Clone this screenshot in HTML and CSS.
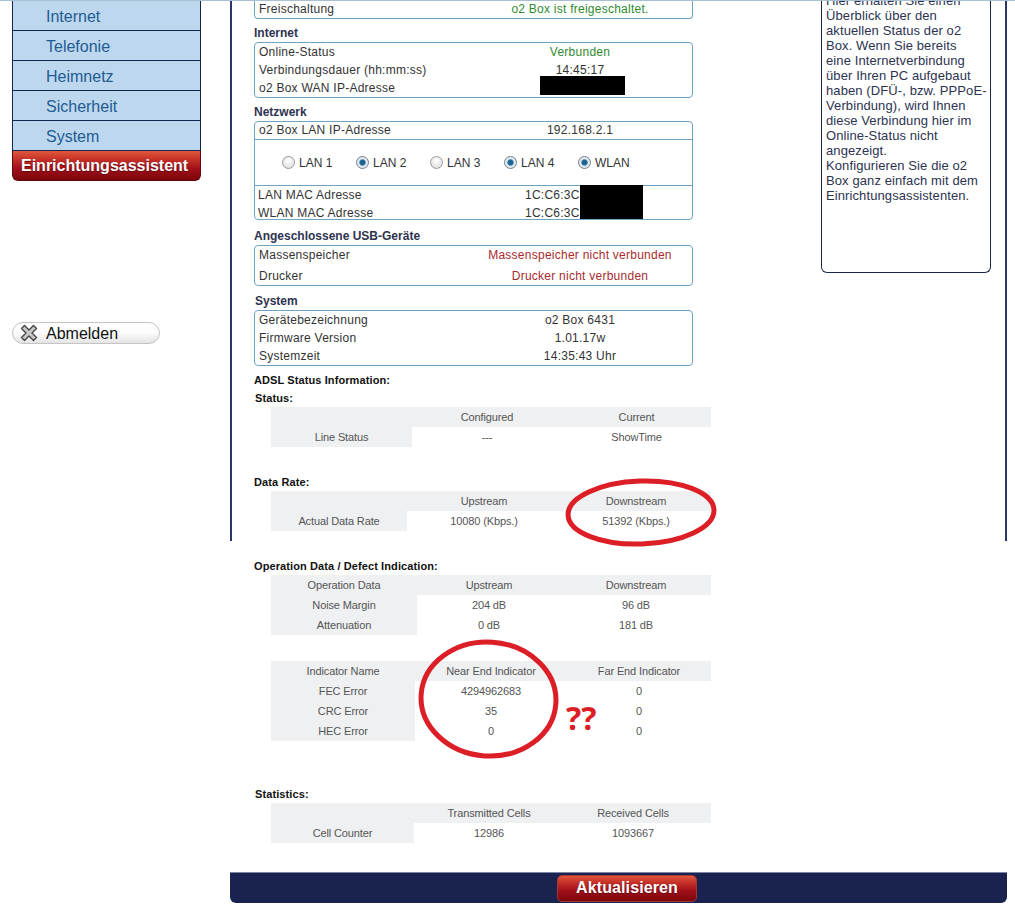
FILE: index.html
```html
<!DOCTYPE html>
<html lang="de">
<head>
<meta charset="utf-8">
<title>o2 Box Status</title>
<link rel="stylesheet" href="styles.css">
</head>
<body>
<div class="topline"></div>
<div class="page">
  <aside class="sidebar">
    <nav class="nav">
      <a class="nav-item">Internet</a>
      <a class="nav-item">Telefonie</a>
      <a class="nav-item">Heimnetz</a>
      <a class="nav-item">Sicherheit</a>
      <a class="nav-item">System</a>
      <a class="nav-wizard">Einrichtungsassistent</a>
    </nav>
    <a class="logout">
      <svg class="logout-icon" viewBox="0 0 18 18" width="18" height="18"><path d="M4.5 1.5 9 6l4.5-4.5 3 3L12 9l4.500 4.500-3 3L9 12l-4.500 4.500-3-3L6 9 1.500 4.500z" fill="#c9c9c9" stroke="#444" stroke-width="1.400" stroke-linejoin="round"/></svg>
      <span>Abmelden</span>
    </a>
  </aside>

  <main class="main">
    <div class="panel">
      <div class="content">
        <div class="box box-open">
          <div class="row"><span>Freischaltung</span><span class="val green">o2 Box ist freigeschaltet.</span></div>
        </div>

        <h3 class="heading">Internet</h3>
        <div class="box">
          <div class="row"><span>Online-Status</span><span class="val green">Verbunden</span></div>
          <div class="row"><span>Verbindungsdauer (hh:mm:ss)</span><span class="val">14:45:17</span></div>
          <div class="row"><span>o2 Box WAN IP-Adresse</span><span class="val"><span class="mask mask-wan"></span></span></div>
        </div>

        <h3 class="heading">Netzwerk</h3>
        <div class="box">
          <div class="row row-tight"><span>o2 Box LAN IP-Adresse</span><span class="val">192.168.2.1</span></div>
          <div class="ports">
            <span class="port"><i class="radio"></i>LAN 1</span>
            <span class="port"><i class="radio on"></i>LAN 2</span>
            <span class="port"><i class="radio"></i>LAN 3</span>
            <span class="port"><i class="radio on"></i>LAN 4</span>
            <span class="port"><i class="radio on"></i>WLAN</span>
          </div>
          <div class="macs">
            <div class="row row-mac"><span>LAN MAC Adresse</span><span class="val-left">1C:C6:3C</span></div>
            <div class="row row-mac"><span>WLAN MAC Adresse</span><span class="val-left">1C:C6:3C</span></div>
            <span class="mask mask-mac"></span>
          </div>
        </div>

        <h3 class="heading heading-usb">Angeschlossene USB-Geräte</h3>
        <div class="box">
          <div class="row row-wide"><span>Massenspeicher</span><span class="val red">Massenspeicher nicht verbunden</span></div>
          <div class="row row-wide"><span>Drucker</span><span class="val red">Drucker nicht verbunden</span></div>
        </div>

        <h3 class="heading heading-sys">System</h3>
        <div class="box">
          <div class="row"><span>Gerätebezeichnung</span><span class="val">o2 Box 6431</span></div>
          <div class="row"><span>Firmware Version</span><span class="val">1.01.17w</span></div>
          <div class="row"><span>Systemzeit</span><span class="val">14:35:43 Uhr</span></div>
        </div>

        <h4 class="sub sub-adsl">ADSL Status Information:</h4>
        <h4 class="sub sub-status">Status:</h4>
        <table class="data w-status">
          <tr class="head"><td></td><td>Configured</td><td>Current</td></tr>
          <tr><th>Line Status</th><td>---</td><td>ShowTime</td></tr>
        </table>

        <h4 class="sub sub-rate">Data Rate:</h4>
        <table class="data w-rate">
          <tr class="head"><td></td><td>Upstream</td><td>Downstream</td></tr>
          <tr><th>Actual Data Rate</th><td>10080 (Kbps.)</td><td>51392 (Kbps.)</td></tr>
        </table>
      </div>

      <aside class="help">
        <p class="help-text">Hier erhalten Sie einen<br>Überblick über den<br>aktuellen Status der o2<br>Box. Wenn Sie bereits<br>eine Internetverbindung<br>über Ihren PC aufgebaut<br>haben (DFÜ-, bzw. PPPoE-<br>Verbindung), wird Ihnen<br>diese Verbindung hier im<br>Online-Status nicht<br>angezeigt.<br>Konfigurieren Sie die o2<br>Box ganz einfach mit dem<br>Einrichtungsassistenten.</p>
      </aside>
    </div>

    <div class="lower">
      <h4 class="sub sub-op">Operation Data / Defect Indication:</h4>
      <table class="data w-op">
        <tr class="head"><td>Operation Data</td><td>Upstream</td><td>Downstream</td></tr>
        <tr><th>Noise Margin</th><td>204 dB</td><td>96 dB</td></tr>
        <tr><th>Attenuation</th><td>0 dB</td><td>181 dB</td></tr>
      </table>

      <table class="data w-ind">
        <tr class="head"><td>Indicator Name</td><td>Near End Indicator</td><td>Far End Indicator</td></tr>
        <tr><th>FEC Error</th><td>4294962683</td><td>0</td></tr>
        <tr><th>CRC Error</th><td>35</td><td>0</td></tr>
        <tr><th>HEC Error</th><td>0</td><td>0</td></tr>
      </table>

      <h4 class="sub sub-stat">Statistics:</h4>
      <table class="data w-stat">
        <tr class="head"><td></td><td>Transmitted Cells</td><td>Received Cells</td></tr>
        <tr><th>Cell Counter</th><td>12986</td><td>1093667</td></tr>
      </table>
    </div>

    <footer class="footer"><a class="refresh">Aktualisieren</a></footer>
  </main>
</div>

<svg class="marks" width="1015" height="913" viewBox="0 0 1015 913">
  <ellipse cx="641" cy="512.500" rx="73" ry="31.500" transform="rotate(-2 641 512)" fill="none" stroke="#dc1f26" stroke-width="5"/>
  <ellipse cx="488.500" cy="699" rx="67.500" ry="57" transform="rotate(4 488 699)" fill="none" stroke="#dc1f26" stroke-width="5"/>
</svg>
<span class="question">??</span>
</body>
</html>
```
FILE: styles.css
```css
* { box-sizing: border-box; }
html, body { margin: 0; padding: 0; background: #fff; overflow: hidden; }
body {
  position: relative;
  width: 1015px;
  height: 913px;
  font-family: "Liberation Sans", Arial, sans-serif;
  font-size: 12px;
  color: #333;
}
.topline { height: 1px; background: #a9bfd3; }
.page { display: flex; align-items: flex-start; }

/* Sidebar */
.sidebar { width: 230px; padding-left: 12px; flex: none; }
.nav { width: 189px; display: flex; flex-direction: column; }
.nav-item {
  height: 30px;
  line-height: 31px;
  padding-left: 33px;
  font-size: 16px;
  color: #1f5c92;
  background: #bdd7ee;
  border: 1px solid #14264f;
  border-width: 0 1px 1px;
}
.nav-wizard {
  height: 30px;
  line-height: 30px;
  padding-left: 8px;
  font-size: 16px;
  font-weight: bold;
  color: #fff;
  white-space: nowrap;
  text-shadow: 0 1px 1px #5e0a10;
  background: linear-gradient(#e0573c 0, #c9362a 25%, #a3101a 60%, #7c0509 100%);
  border-radius: 0 0 6px 6px;
  border: 1px solid #5e0a10;
  border-top: 0;
}
.logout {
  margin-top: 141px;
  width: 148px;
  height: 22px;
  display: flex;
  align-items: center;
  gap: 8px;
  padding-left: 7px;
  font-size: 16px;
  line-height: 22px;
  color: #111;
  border: 1px solid #c4c4c4;
  border-radius: 11px;
  background: linear-gradient(#fff 0, #fbfbfb 50%, #e4e4e4 100%);
}
.logout span { padding-top: 1px; }
.logout-icon { flex: none; }

/* Main column */
.main { width: 777px; flex: none; }
.panel {
  height: 540px;
  display: flex;
  border-left: 2px solid #2a3768;
  border-right: 2px solid #2a3768;
}
.content { width: 479px; padding-left: 22px; flex: none; }
.box {
  width: 439px;
  background: #fff;
  border: 1px solid #6ea3c4;
  border-radius: 4px;
  padding: 0 4px;
}
.box-open { border-top: 0; border-radius: 0 0 4px 4px; }
.row {
  display: grid;
  grid-template-columns: 1fr 216px;
  height: 18px;
  line-height: 18px;
  font-size: 12px;
  color: #333;
  letter-spacing: .25px;
  white-space: nowrap;
}
.box-open .row { height: 17px; line-height: 17px; }
.val { text-align: center; }
.val-left { padding-left: 53px; }
.green { color: #2f8a2f; }
.red { color: #a82a2e; }
.row-tight { height: 17px; line-height: 17px; }
.row-wide { height: 19.500px; line-height: 19.500px; }
.row-wide + .row-wide { line-height: 21.500px; }
.ports {
  margin: 0 -4px;
  height: 47px;
  padding-left: 27px;
  display: flex;
  align-items: center;
  border-top: 1px solid #6ea3c4;
  border-bottom: 1px solid #6ea3c4;
}
.port { width: 74px; display: flex; align-items: center; gap: 4px; white-space: nowrap; }
.radio {
  width: 13px;
  height: 13px;
  border-radius: 50%;
  border: 1px solid #9a9a9a;
  background: radial-gradient(circle at 50% 35%, #fff, #d8d8d8);
}
.radio.on {
  border-color: #6d7f8f;
  background: radial-gradient(circle, #1c5f8c 0, #1c6a9a 32%, #dfe6ea 48%, #f2f2f2 100%);
}
.macs { position: relative; margin-left: -1px; }
.row-mac { height: 17px; line-height: 19px; }
.row-mac + .row-mac { height: 16px; line-height: 21px; }
.mask { position: absolute; background: #000; display: block; }
.mask-wan { left: 540px; top: 76px; width: 85px; height: 19px; }
.mask-mac { left: 322px; top: -1px; width: 63px; height: 34px; }

.heading {
  margin: 3px 0 0;
  height: 20px;
  line-height: 22px;
  font-size: 12px;
  font-weight: bold;
  color: #2e3350;
}
.heading-usb { margin-top: 5px; }
.heading-sys { margin-top: 4px; padding-left: 1px; }

.sub {
  margin: 0;
  height: 18px;
  line-height: 18px;
  font-size: 11px;
  font-weight: bold;
  color: #111;
  letter-spacing: .1px;
  white-space: nowrap;
}
.sub-adsl { margin-top: 5px; }
.sub-status { padding-left: 1px; }
.sub-rate { margin-top: 26px; }
.sub-op { padding-top: 16px; height: 34px; }
.sub-stat { margin-top: 44px; padding-left: 1px; }

/* Tables */
.data {
  margin-left: 17px;
  width: 440px;
  table-layout: fixed;
  border-collapse: collapse;
  font-size: 11px;
  letter-spacing: -.12px;
  color: #555;
}
.data td, .data th {
  height: 20px;
  padding: 0;
  text-align: center;
  font-weight: normal;
  white-space: nowrap;
}
.data th { background: #eff0f1; }
.data .head td { background: #eff0f1; }
.w-status .head td:nth-child(1) { width: 141px; }
.w-status .head td:nth-child(2) { width: 150px; }
.w-rate .head td:nth-child(1) { width: 136px; }
.w-rate .head td:nth-child(2) { width: 154px; }
.w-op .head td:nth-child(1) { width: 146px; }
.w-op .head td:nth-child(2) { width: 144px; }
.w-ind { margin-top: 26px; }
.w-ind .head td:nth-child(1) { width: 144px; }
.w-ind .head td:nth-child(2) { width: 152px; }
.w-stat .head td:nth-child(1) { width: 143px; }
.w-stat .head td:nth-child(2) { width: 150px; }
.w-stat td:nth-child(3) { padding-right: 9px; }

/* Help */
.help {
  margin-left: 110px;
  width: 170px;
  height: 272px;
  padding: 0 4px;
  overflow: hidden;
  border: 1px solid #1c2547;
  border-top: 0;
  border-radius: 0 0 6px 6px;
}
.help-text {
  margin: -8px 0 0;
  font-size: 13px;
  letter-spacing: .1px;
  line-height: 15px;
  color: #2c3350;
  white-space: nowrap;
}

/* Lower part */
.lower { padding-left: 24px; height: 331px; }

.footer {
  height: 31px;
  display: flex;
  justify-content: center;
  padding-left: 17px;
  padding-top: 2px;
  background: #1a2350;
  border-top: 1px solid #7c86a6;
  border-radius: 0 0 6px 6px;
}
.refresh {
  width: 140px;
  height: 27px;
  line-height: 23px;
  text-align: center;
  font-size: 16px;
  letter-spacing: .1px;
  font-weight: bold;
  color: #fff;
  text-shadow: 0 1px 1px #5e0a10;
  background: linear-gradient(#e0573c 0, #c9362a 22%, #a3101a 58%, #7c0509 100%);
  border: 1px solid #a53a35;
  border-radius: 5px;
}

/* Annotations lying over the screenshot */
.marks { position: absolute; left: 0; top: 0; pointer-events: none; }
.question {
  position: absolute;
  left: 566px;
  top: 698px;
  font-family: "Open Sans", sans-serif;
  font-size: 32px;
  line-height: 40px;
  font-weight: bold;
  color: #dc1f26;
}
```
